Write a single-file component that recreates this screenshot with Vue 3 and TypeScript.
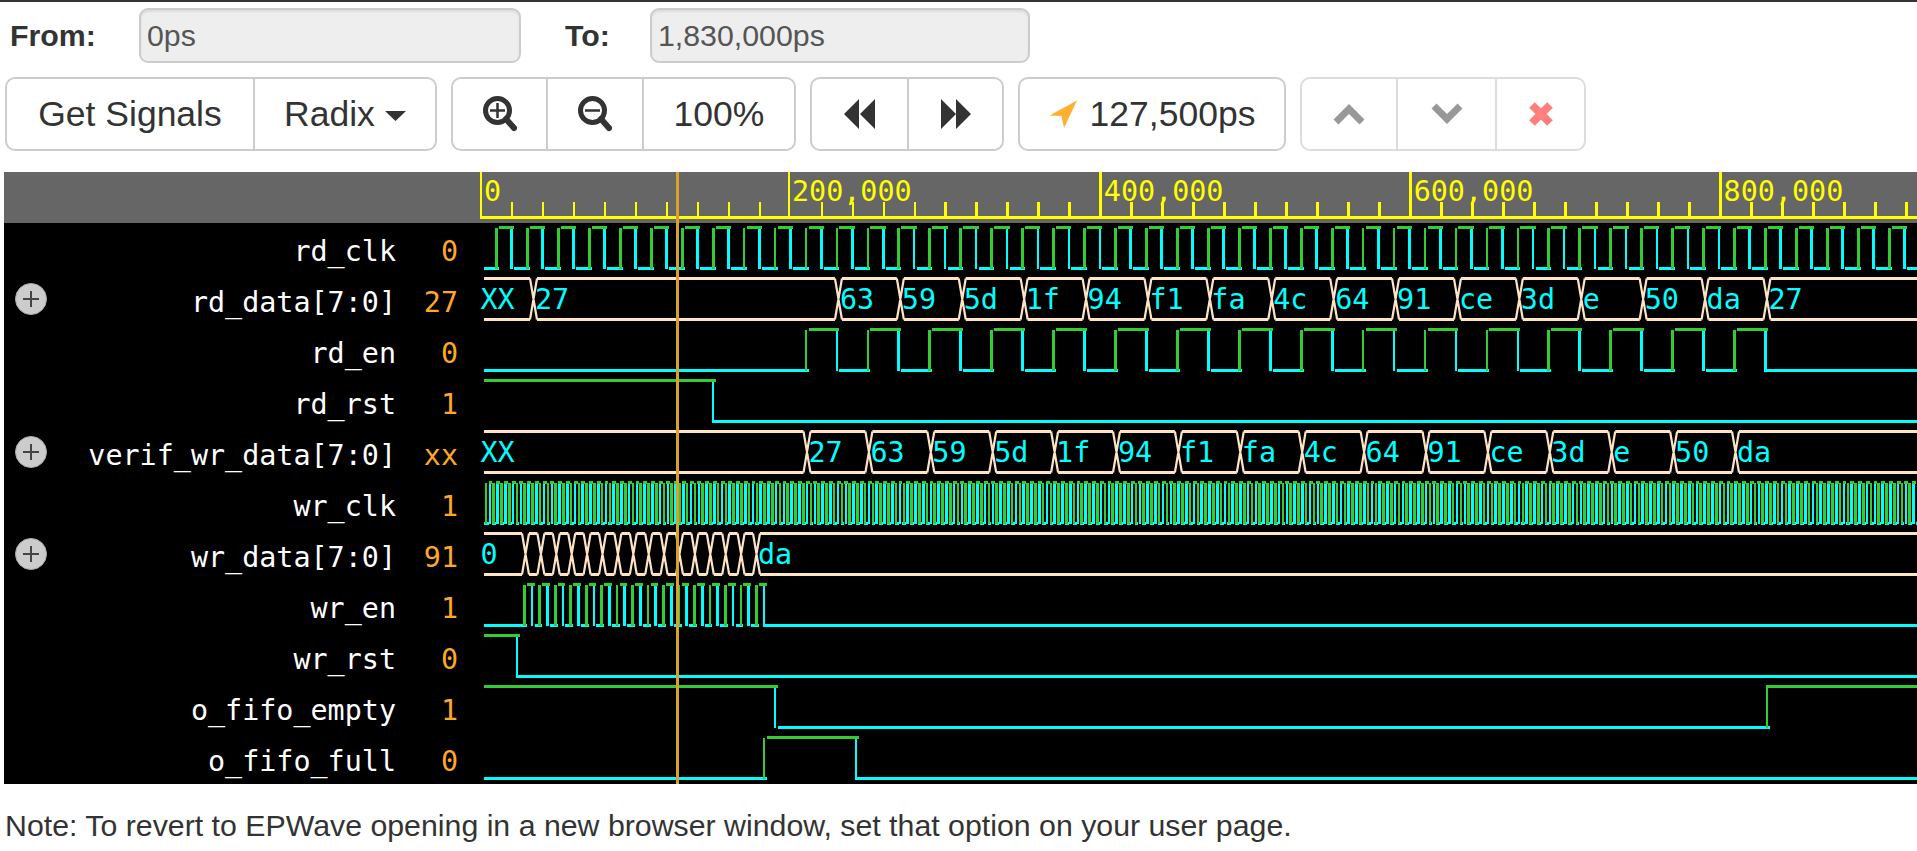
<script setup lang="ts">
// waveform geometry, all in page pixels (the svg viewBox starts at 4,172)
const ROW = 51
const START = 484
const END = 1917
const TICK = 30.99
const ORIGIN = 481

const signals = [
  { name: 'rd_clk', value: '0' },
  { name: 'rd_data[7:0]', value: '27', bus: true },
  { name: 'rd_en', value: '0' },
  { name: 'rd_rst', value: '1' },
  { name: 'verif_wr_data[7:0]', value: 'xx', bus: true },
  { name: 'wr_clk', value: '1' },
  { name: 'wr_data[7:0]', value: '91', bus: true },
  { name: 'wr_en', value: '1' },
  { name: 'wr_rst', value: '0' },
  { name: 'o_fifo_empty', value: '1' },
  { name: 'o_fifo_full', value: '0' },
]

const rows = signals.map((s, i) => ({ ...s, label: 261 + i * ROW, mid: 248 + i * ROW }))

const clk = (k: number) => 496.5 + 30.95 * k

function range(from: number, to: number, step = 1): number[] {
  const out: number[] = []
  for (let k = from; k <= to; k += step) out.push(k)
  return out
}

let green = ''
let cyan = ''

function rect(x0: number, y0: number, x1: number, y1: number) {
  return `M${x0} ${y0}H${x1}V${y1}H${x0}Z`
}

// thickness comes out 2 or 3 px depending on where the edge falls, as in the scaled canvas
function edge(x: number, y0: number, y1: number, half = 1.35) {
  return rect(Math.round(x - half), y0, Math.round(x + half), y1)
}

function digital(row: number, startHigh: boolean, toggles: number[], half = 1.35) {
  const top = 226 + row * ROW
  let high = startHigh
  let from = START
  toggles.concat(END + 4).forEach((x, i) => {
    const to = Math.round(x + 2.5)
    if (high) green += rect(from, top, to, top + 3)
    else cyan += rect(from, top + 41, to, top + 44)
    if (x <= END) {
      if (high) cyan += edge(x, top + 3, top + 43, half)
      else green += edge(x, top + 2, top + 43, half)
    }
    high = !high
    // the last transition runs straight into its long flat line
    from = i === toggles.length - 1 ? Math.round(x - 1) : to
  })
}

const clkEdges: number[] = []
for (const k of range(0, 46)) clkEdges.push(clk(k), clk(k) + 15.3)
digital(0, false, clkEdges)

digital(2, false, range(10, 41).map(clk))
digital(3, true, [713])

const wrClk: number[] = []
for (const k of range(0, 185)) wrClk.push(486 + 7.7375 * k, 489.9 + 7.7375 * k)
digital(5, false, wrClk, 1.3)

const wrEn: number[] = []
for (const j of range(0, 15)) wrEn.push(524.3 + 15.47 * j, 532 + 15.47 * j)
digital(7, false, wrEn)

digital(8, true, [517])
digital(9, true, [775, 1767])
digital(10, false, [764, 856])

const greenPath = green
const cyanPath = cyan

let flat = ''
let cross = ''
const busLabels: { id: string; x: number; y: number; text: string }[] = []

function busRow(row: number, cuts: number[], values: string[]) {
  const top = 227.5 + row * ROW
  const bottom = top + 41
  const y = 309 + (row - 1) * ROW
  let from = START
  cuts.forEach((c) => {
    flat += `M${from} ${top}H${c - 3.5}M${from} ${bottom}H${c - 3.5}`
    cross += `M${c - 3.5} ${top}L${c + 3.5} ${bottom}M${c - 3.5} ${bottom}L${c + 3.5} ${top}`
    from = c + 3.5
  })
  flat += `M${from} ${top}H${END}M${from} ${bottom}H${END}`
  values.forEach((text, i) => {
    if (!text) return
    const x = i === 0 ? 480.5 : cuts[i - 1] + 1.5
    busLabels.push({ id: `${row}-${i}`, x, y, text })
  })
}

const bytes = ['63', '59', '5d', '1f', '94', 'f1', 'fa', '4c', '64', '91', 'ce', '3d', 'e', '50', 'da']

busRow(1, [533.5, ...range(0, 15).map((j) => clk(11 + 2 * j) + 1.5)], ['XX', '27', ...bytes, '27'])
busRow(4, range(0, 15).map((j) => clk(10 + 2 * j) + 1), ['XX', '27', ...bytes])
busRow(
  6,
  range(0, 15).map((j) => 525.5 + 15.4 * j),
  ['0', ...Array<string>(15).fill(''), 'da'],
)

const flatPath = flat
const crossPath = cross

// the 200,000 mark sits a little left of the even spacing
const tickX = (j: number) => (j === 10 ? 789 : ORIGIN + j * TICK)

const ticks = range(0, 46).map((j) => ({
  id: j,
  d: edge(tickX(j), j % 10 === 0 ? 172 : 202, 218),
}))

const axisLabels = [
  { text: '0', x: tickX(0) + 3 },
  { text: '200,000', x: tickX(10) + 3 },
  { text: '400,000', x: tickX(20) + 3 },
  { text: '600,000', x: tickX(30) + 3 },
  { text: '800,000', x: tickX(40) + 3 },
]
</script>

<template>
  <div class="page">
    <div class="range">
      <label class="from">From:</label>
      <input class="field field-from" value="0ps" disabled />
      <label class="to">To:</label>
      <input class="field field-to" value="1,830,000ps" disabled />
    </div>

    <div class="toolbar">
      <div class="group">
        <button class="btn w-signals">Get Signals</button>
        <button class="btn w-radix">
          Radix
          <svg class="caret" width="21" height="10" viewBox="0 0 21 10"><path d="M0 0H21L10.5 10Z" /></svg>
        </button>
      </div>
      <div class="group">
        <button class="btn w-zoom">
          <svg width="34" height="36" viewBox="0 0 34 36">
            <circle cx="14.5" cy="14.5" r="12" class="lens" />
            <path d="M23 23L31 32" class="lens handle" />
            <path d="M14.5 7V22M7 14.5H22" class="lens thin" />
          </svg>
        </button>
        <button class="btn w-zoom2">
          <svg width="34" height="36" viewBox="0 0 34 36">
            <circle cx="14.5" cy="14.5" r="12" class="lens" />
            <path d="M23 23L31 32" class="lens handle" />
            <path d="M7 14.5H22" class="lens thin" />
          </svg>
        </button>
        <button class="btn w-pct">100%</button>
      </div>
      <div class="group">
        <button class="btn w-step">
          <svg width="32" height="30" viewBox="0 0 32 30"><path d="M0 15L15 0V30ZM16 15L31 0V30Z" class="dark" /></svg>
        </button>
        <button class="btn w-step2">
          <svg width="32" height="30" viewBox="0 0 32 30"><path d="M1 0L16 15L1 30ZM16 0L31 15L16 30Z" class="dark" /></svg>
        </button>
      </div>
      <div class="group">
        <button class="btn w-cursor">
          <svg class="arrow" width="29" height="29" viewBox="0 0 29 29">
            <path d="M28 0.5L15 28L12.5 16L0.5 15.5Z" fill="#ffb030" />
          </svg>
          127,500ps
        </button>
      </div>
      <div class="group faded">
        <button class="btn w-up">
          <svg width="34" height="22" viewBox="0 0 34 22"><path d="M4 19L17 6L30 19" class="chev" /></svg>
        </button>
        <button class="btn w-down">
          <svg width="34" height="22" viewBox="0 0 34 22"><path d="M4 3L17 16L30 3" class="chev" /></svg>
        </button>
        <button class="btn w-close">
          <svg width="26" height="26" viewBox="0 0 26 26"><path d="M4 4L22 22M22 4L4 22" class="cross" /></svg>
        </button>
      </div>
    </div>

    <svg class="wave" width="1913" height="612" viewBox="4 172 1913 612">
      <rect x="4" y="172" width="1913" height="51" fill="#666" />
      <rect x="4" y="223" width="1913" height="561" fill="#000" />

      <path v-for="t in ticks" :key="t.id" :d="t.d" class="yellow" shape-rendering="crispEdges" />
      <rect x="480" y="216" width="1437" height="3" class="yellow" />
      <text v-for="a in axisLabels" :key="a.text" :x="a.x" y="201" class="mono yellow">{{ a.text }}</text>

      <g v-for="r in rows" :key="r.name">
        <text x="396" :y="r.label" text-anchor="end" class="mono name">{{ r.name }}</text>
        <text x="458" :y="r.label" text-anchor="end" class="mono val">{{ r.value }}</text>
        <g v-if="r.bus">
          <circle cx="31" :cy="r.mid" r="15.5" fill="#ccc" stroke="#aaa" />
          <path :d="`M23 ${r.mid}H39M31 ${r.mid - 8}V${r.mid + 8}`" stroke="#444" stroke-width="2" fill="none" />
        </g>
      </g>

      <path :d="cyanPath" fill="#0ff" shape-rendering="crispEdges" />
      <path :d="greenPath" fill="#32cd32" shape-rendering="crispEdges" />
      <path :d="flatPath" fill="none" stroke="#ffe4c4" stroke-width="3" />
      <path :d="crossPath" fill="none" stroke="#ffe4c4" stroke-width="2.2" />
      <text v-for="b in busLabels" :key="b.id" :x="b.x" :y="b.y" class="mono bus-text">{{ b.text }}</text>

      <rect x="676" y="172" width="3" height="612" fill="#daa02c" />
    </svg>

    <p class="note">Note: To revert to EPWave opening in a new browser window, set that option on your user page.</p>
  </div>
</template>

<style scoped>
.page {
  width: 1917px;
  height: 851px;
  box-sizing: border-box;
  border-top: 2px solid #333;
  overflow: hidden;
  font-family: "Liberation Sans", Arial, sans-serif;
  color: #333;
}

.range {
  display: flex;
  align-items: center;
  height: 55px;
  margin-top: 6px;
  font-size: 30.3px;
}

label {
  font-weight: bold;
  color: #333;
}

.from {
  width: 129px;
  padding-left: 10px;
  box-sizing: border-box;
  margin-right: 0;
}

.to {
  margin-left: 44px;
  width: 85px;
}

.from + .field {
  margin-left: 10px;
}

.field {
  height: 55px;
  box-sizing: border-box;
  padding: 0 6px;
  font: inherit;
  color: #555;
  background: #eee;
  border: 2px solid #ccc;
  border-radius: 9px;
  box-shadow: inset 0 2px 2px rgba(0, 0, 0, 0.08);
}

.field-from {
  width: 382px;
}

.field-to {
  width: 380px;
}

.toolbar {
  display: flex;
  margin-top: 14px;
  margin-left: 5px;
  gap: 14px;
}

.group {
  display: flex;
  height: 74px;
  box-sizing: border-box;
  border: 2px solid #ccc;
  border-radius: 10px;
  background: #fff;
}

.btn {
  display: flex;
  align-items: center;
  justify-content: center;
  gap: 12px;
  height: 100%;
  box-sizing: border-box;
  padding: 0;
  border: none;
  border-left: 2px solid #ccc;
  background: transparent;
  font-family: inherit;
  font-size: 35.5px;
  color: #333;
}

.btn:first-child {
  border-left: none;
}

.w-signals { width: 246px; }
.w-radix { width: 182px; }
.w-zoom { width: 93px; }
.w-zoom2 { width: 96px; }
.w-pct { width: 152px; }
.w-step { width: 95px; }
.w-step2 { width: 95px; }
.w-cursor { width: 264px; }
.w-up { width: 94px; }
.w-down { width: 99px; }
.w-close { width: 89px; }

.faded {
  opacity: 0.65;
}

.caret {
  fill: #333;
  margin-top: 3px;
  margin-left: -2px;
}

.lens {
  fill: none;
  stroke: #333;
  stroke-width: 5;
}

.handle {
  stroke-linecap: round;
  stroke-width: 6;
}

.thin {
  stroke-width: 2.5;
}

.dark {
  fill: #333;
}

.chev {
  fill: none;
  stroke: #626262;
  stroke-width: 7;
}

.cross {
  fill: none;
  stroke: #ff3c3c;
  stroke-width: 8;
}

.wave {
  display: block;
  margin-top: 21px;
  margin-left: 4px;
}

.mono {
  font-family: "DejaVu Sans Mono", monospace;
  font-size: 28.4px;
}

.yellow {
  fill: #ff0;
}

.name {
  fill: #fff;
}

.val {
  fill: #ffa826;
}

.bus-text {
  fill: #0ff;
}

.note {
  margin: 24px 0 0 5px;
  font-size: 30.3px;
  line-height: 36px;
}
</style>

<style>
html,
body {
  margin: 0;
  background: #fff;
  overflow: hidden;
}
</style>
